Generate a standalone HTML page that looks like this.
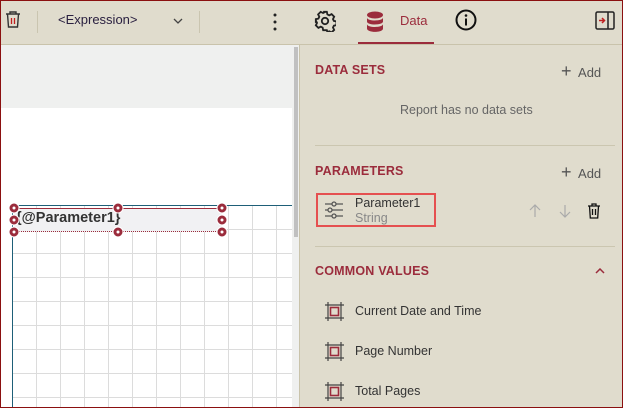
<!DOCTYPE html>
<html><head><style>
*{margin:0;padding:0;box-sizing:border-box}
body{width:623px;height:408px;overflow:hidden;background:#e0dccd;font-family:"Liberation Sans",sans-serif;position:relative}
.a{position:absolute}
.t{font-size:12.5px;color:#333;white-space:nowrap}
.h{font-size:12.5px;font-weight:bold;color:#9b2c3c;letter-spacing:0.2px}
.add{color:#555;font-size:13px}
</style></head><body>
<div class="a" style="left:0;top:0;width:623px;height:408px;border:1px solid #8b1010;z-index:9;pointer-events:none"></div>
<div class="a" style="left:0;top:44px;width:623px;height:1px;background:#c9c3ab"></div>
<svg class="a" style="left:4px;top:10px" width="18" height="20" viewBox="0 0 18 20"><path d="M2 4h14M6 4V2h6v2M3.5 4l1 13h9l1-13" fill="none" stroke="#333" stroke-width="1.4"/><path d="M7.5 8v6M10.5 8v6" stroke="#c02020" stroke-width="1.3"/></svg>
<div class="a" style="left:37px;top:11px;width:1px;height:22px;background:#cac5b0"></div>
<div class="a t" style="left:58px;top:12px;color:#2a2040;font-size:13px">&lt;Expression&gt;</div>
<svg class="a" style="left:173px;top:17px" width="10" height="8"><path d="M1 2l4 4 4-4" fill="none" stroke="#444" stroke-width="1.3"/></svg>
<div class="a" style="left:199px;top:11px;width:1px;height:22px;background:#cac5b0"></div>
<svg class="a" style="left:273px;top:13px" width="4" height="18"><circle cx="2" cy="2" r="1.5" fill="#222"/><circle cx="2" cy="9" r="1.5" fill="#222"/><circle cx="2" cy="16" r="1.5" fill="#222"/></svg>
<svg class="a" style="left:314px;top:10px" width="22" height="22" viewBox="0 0 24 24"><path d="M10 2h4l.6 2.8 2 1 2.6-1.3 2.8 2.8-1.3 2.6 1 2 2.8.6v4l-2.8.6-1 2 1.3 2.6-2.8 2.8-2.6-1.3-2 1L14 22h-4l-.6-2.8-2-1-2.6 1.3-2.8-2.8 1.3-2.6-1-2L2 14v-4l2.8-.6 1-2-1.3-2.6 2.8-2.8 2.6 1.3 2-1z" fill="none" stroke="#222" stroke-width="2"/><circle cx="12" cy="12" r="3.5" fill="none" stroke="#222" stroke-width="2"/></svg>
<svg class="a" style="left:366px;top:11px" width="18" height="22" viewBox="0 0 18 22"><ellipse cx="9" cy="4" rx="8" ry="3.5" fill="#9b2c3c"/><path d="M1 6.5c0 4 16 4 16 0v4c0 4-16 4-16 0z" fill="#9b2c3c"/><path d="M1 13c0 4 16 4 16 0v4.5c0 4.5-16 4.5-16 0z" fill="#9b2c3c"/></svg>
<div class="a t" style="left:400px;top:13px;color:#9b2c3c;font-size:13px">Data</div>
<div class="a" style="left:358px;top:42px;width:76px;height:2px;background:#9b2c3c"></div>
<svg class="a" style="left:455px;top:9px" width="22" height="22" viewBox="0 0 22 22"><circle cx="11" cy="11" r="9.5" fill="none" stroke="#111" stroke-width="2"/><rect x="10" y="9.5" width="2" height="7" fill="#111"/><circle cx="11" cy="6.5" r="1.3" fill="#111"/></svg>
<svg class="a" style="left:595px;top:11px" width="20" height="19" viewBox="0 0 20 19"><rect x="1" y="1" width="18" height="17" rx="1.5" fill="none" stroke="#222" stroke-width="1.5"/><path d="M13 1v17" stroke="#222" stroke-width="1.5"/><path d="M4 9.5h5M7 7l2.5 2.5L7 12" stroke="#c02020" stroke-width="1.5" fill="none"/></svg>

<div class="a" style="left:1px;top:45px;width:291px;height:63px;background:#eff0ef"></div>
<div class="a" style="left:1px;top:108px;width:291px;height:300px;background:#fff;
background-image:linear-gradient(#dcdcdc 1px,transparent 1px),linear-gradient(90deg,#dcdcdc 1px,transparent 1px);background-size:24px 24px;background-position:11px 97px"></div>
<div class="a" style="left:1px;top:108px;width:291px;height:97px;background:#fff"></div>
<div class="a" style="left:1px;top:108px;width:11px;height:300px;background:#fff"></div>
<div class="a" style="left:12px;top:205px;width:280px;height:1px;background:#1e5f78"></div>
<div class="a" style="left:12px;top:205px;width:1px;height:203px;background:#1e5f78"></div>
<div class="a" style="left:292px;top:45px;width:8px;height:363px;background:#eff0ef"></div>
<div class="a" style="left:294px;top:47px;width:4px;height:190px;background:#c0c0c0"></div>
<div class="a" style="left:299px;top:45px;width:1px;height:363px;background:#c9c3ab"></div>
<div class="a" style="left:14px;top:208px;width:208px;height:24px;background:#f1f1f3;border-bottom:1px dotted #9b2c3c;border-top:1px solid #9b2c3c"></div>
<div class="a" style="left:16px;top:210px;font-size:14.5px;font-weight:bold;color:#333">{@Parameter1}</div>
<svg class="a" style="left:8px;top:202px" width="222" height="38">
<g fill="#9b2c3c" stroke="#fff" stroke-width="1"><circle cx="6" cy="6" r="5"/><circle cx="110" cy="6" r="5"/><circle cx="214" cy="6" r="5"/><circle cx="6" cy="18" r="5"/><circle cx="214" cy="18" r="5"/><circle cx="6" cy="30" r="5"/><circle cx="110" cy="30" r="5"/><circle cx="214" cy="30" r="5"/></g>
<g fill="#fff"><circle cx="6" cy="6" r="1.5"/><circle cx="110" cy="6" r="1.5"/><circle cx="214" cy="6" r="1.5"/><circle cx="6" cy="18" r="1.5"/><circle cx="214" cy="18" r="1.5"/><circle cx="6" cy="30" r="1.5"/><circle cx="110" cy="30" r="1.5"/><circle cx="214" cy="30" r="1.5"/></g></svg>

<div class="a h" style="left:315px;top:63px">DATA SETS</div>
<div class="a add" style="left:561px;top:61px"><span style="font-size:18px;font-weight:300">+</span>&nbsp; Add</div>
<div class="a t" style="left:400px;top:103px;color:#666">Report has no data sets</div>
<div class="a" style="left:315px;top:145px;width:300px;height:1px;background:#cbc6b0"></div>
<div class="a h" style="left:315px;top:164px">PARAMETERS</div>
<div class="a add" style="left:561px;top:162px"><span style="font-size:18px;font-weight:300">+</span>&nbsp; Add</div>
<div class="a" style="left:316px;top:193px;width:120px;height:34px;border:2px solid #e55050"></div>
<svg class="a" style="left:325px;top:201px" width="18" height="18" viewBox="0 0 18 18"><g stroke="#555" stroke-width="1.3" fill="none"><path d="M0 3h7M11 3h7M0 9h3M7 9h11M0 15h7M11 15h7"/><circle cx="9" cy="3" r="2"/><circle cx="5" cy="9" r="2"/><circle cx="9" cy="15" r="2"/></g></svg>
<div class="a t" style="left:355px;top:196px;color:#333">Parameter1</div>
<div class="a t" style="left:355px;top:211px;color:#888">String</div>
<svg class="a" style="left:529px;top:204px" width="12" height="14"><path d="M6 13V1M1 6l5-5 5 5" fill="none" stroke="#aaa" stroke-width="1.2"/></svg>
<svg class="a" style="left:559px;top:204px" width="12" height="14"><path d="M6 1v12M1 8l5 5 5-5" fill="none" stroke="#aaa" stroke-width="1.2"/></svg>
<svg class="a" style="left:587px;top:203px" width="14" height="16" viewBox="0 0 14 16"><path d="M1 3h12M5 3V1h4v2M2.5 3l.8 12h7.4l.8-12M5.5 6v6M8.5 6v6" fill="none" stroke="#111" stroke-width="1.3"/></svg>
<div class="a" style="left:315px;top:246px;width:300px;height:1px;background:#cbc6b0"></div>
<div class="a h" style="left:315px;top:264px">COMMON VALUES</div>
<svg class="a" style="left:595px;top:268px" width="10" height="7"><path d="M1 5l4-4 4 4" fill="none" stroke="#9b2c3c" stroke-width="1.5"/></svg>
<svg class="a" style="left:325px;top:302px" width="19" height="19" viewBox="0 0 19 19"><path d="M3 0v19M16 0v19M0 3h19M0 16h19" stroke="#444" stroke-width="1.2"/><rect x="5.5" y="5.5" width="8" height="8" fill="none" stroke="#9b2c3c" stroke-width="1.6"/></svg>
<div class="a t" style="left:355px;top:304px">Current Date and Time</div>
<svg class="a" style="left:325px;top:342px" width="19" height="19" viewBox="0 0 19 19"><path d="M3 0v19M16 0v19M0 3h19M0 16h19" stroke="#444" stroke-width="1.2"/><rect x="5.5" y="5.5" width="8" height="8" fill="none" stroke="#9b2c3c" stroke-width="1.6"/></svg>
<div class="a t" style="left:355px;top:344px">Page Number</div>
<svg class="a" style="left:325px;top:382px" width="19" height="19" viewBox="0 0 19 19"><path d="M3 0v19M16 0v19M0 3h19M0 16h19" stroke="#444" stroke-width="1.2"/><rect x="5.5" y="5.5" width="8" height="8" fill="none" stroke="#9b2c3c" stroke-width="1.6"/></svg>
<div class="a t" style="left:355px;top:384px">Total Pages</div>
</body></html>
